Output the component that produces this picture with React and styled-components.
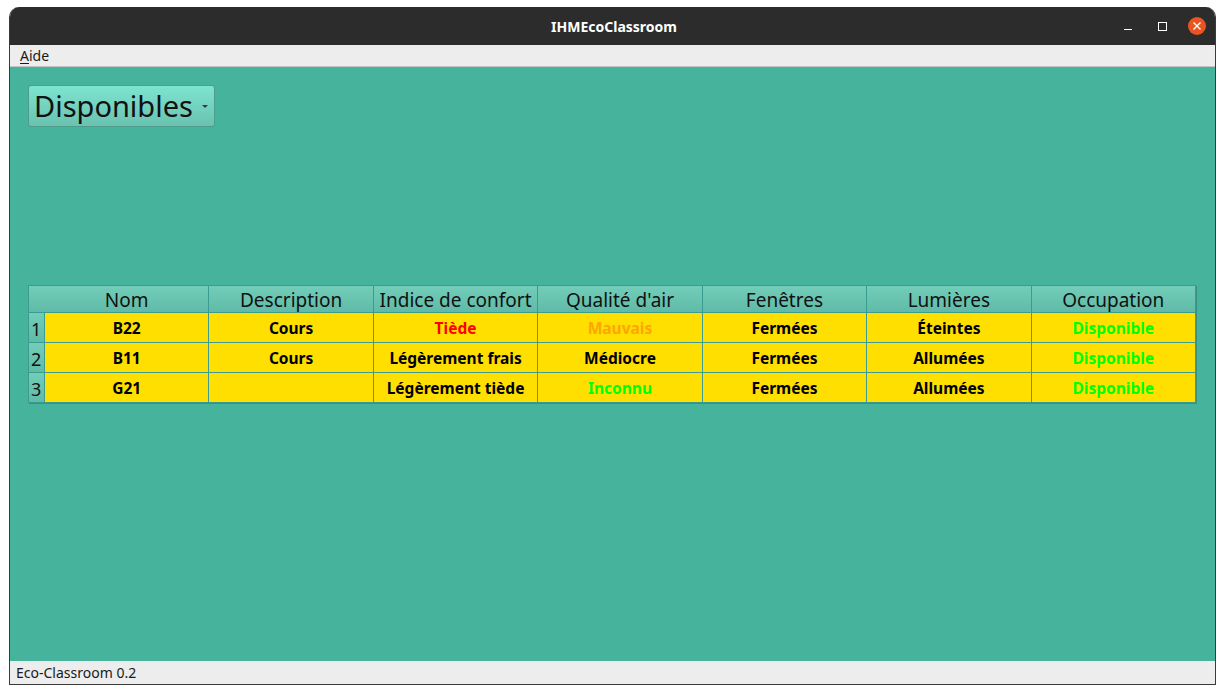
import React from 'react'
import styled, { createGlobalStyle } from 'styled-components'

const GlobalStyle = createGlobalStyle`
  html, body {
    margin: 0;
    padding: 0;
    background: #ffffff;
    font-family: "Noto Sans", "DejaVu Sans", sans-serif;
  }
`

const columns = ['Nom', 'Description', 'Indice de confort', "Qualité d'air", 'Fenêtres', 'Lumières', 'Occupation']

const rows = [
  [
    { text: 'B22' },
    { text: 'Cours' },
    { text: 'Tiède', color: '#ff0000' },
    { text: 'Mauvais', color: '#ffa500' },
    { text: 'Fermées' },
    { text: 'Éteintes' },
    { text: 'Disponible', color: '#00ff00' },
  ],
  [
    { text: 'B11' },
    { text: 'Cours' },
    { text: 'Légèrement frais' },
    { text: 'Médiocre' },
    { text: 'Fermées' },
    { text: 'Allumées' },
    { text: 'Disponible', color: '#00ff00' },
  ],
  [
    { text: 'G21' },
    { text: '' },
    { text: 'Légèrement tiède' },
    { text: 'Inconnu', color: '#00ff00' },
    { text: 'Fermées' },
    { text: 'Allumées' },
    { text: 'Disponible', color: '#00ff00' },
  ],
]

export default function App() {
  return (
    <>
      <GlobalStyle />
      <Window>
        <TitleBar>
          <Title>IHMEcoClassroom</Title>
          <WindowButtons>
            <MinButton />
            <MaxButton />
            <CloseButton>
              <svg width="10" height="10" viewBox="0 0 10 10">
                <path d="M1.5 1.5 L8.5 8.5 M8.5 1.5 L1.5 8.5" stroke="#fff" strokeWidth="1.4" />
              </svg>
            </CloseButton>
          </WindowButtons>
        </TitleBar>
        <MenuBar>
          <MenuItem><u>A</u>ide</MenuItem>
        </MenuBar>
        <Content>
          <Combo>
            <span>Disponibles</span>
            <Arrow />
          </Combo>
          <Table>
            <Corner />
            {columns.map(c => (
              <HeaderCell key={c}>{c}</HeaderCell>
            ))}
            {rows.map((r, i) => (
              <React.Fragment key={i}>
                <RowHeader>{i + 1}</RowHeader>
                {r.map((cell, j) => (
                  <Cell key={j} $color={cell.color}>{cell.text}</Cell>
                ))}
              </React.Fragment>
            ))}
          </Table>
        </Content>
        <StatusBar>Eco-Classroom 0.2</StatusBar>
      </Window>
    </>
  )
}

const Window = styled.div`
  margin: 7px 0 0 9px;
  width: 1207px;
  height: 678px;
  display: flex;
  flex-direction: column;
  border-left: 1px solid #3a3a3a;
  border-right: 1px solid #3a3a3a;
  border-bottom: 1px solid #3a3a3a;
  border-radius: 10px 10px 0 0;
  box-sizing: border-box;
  overflow: hidden;
`

const TitleBar = styled.div`
  height: 38px;
  flex: none;
  background: #2c2c2c;
  position: relative;
  display: flex;
  align-items: center;
  justify-content: center;
`

const Title = styled.div`
  color: #ffffff;
  font-family: "Noto Sans", sans-serif;
  font-weight: bold;
  font-size: 14px;
  margin-left: 3px;
`

const WindowButtons = styled.div`
  position: absolute;
  right: 9px;
  top: 0;
  height: 38px;
  display: flex;
  align-items: center;
`

const MinButton = styled.div`
  width: 8px;
  height: 1px;
  background: #ffffff;
  margin-top: 7px;
  margin-right: 26px;
`

const MaxButton = styled.div`
  width: 7px;
  height: 7px;
  border: 1px solid #ffffff;
  margin-right: 21px;
`

const CloseButton = styled.div`
  width: 18px;
  height: 18px;
  border-radius: 50%;
  background: #e95420;
  display: flex;
  align-items: center;
  justify-content: center;
`

const MenuBar = styled.div`
  height: 21px;
  flex: none;
  background: #ededed;
  border-bottom: 1px solid #c4c4c4;
  display: flex;
  align-items: center;
  padding-left: 10px;
`

const MenuItem = styled.div`
  font-size: 14px;
  color: #1a1a1a;
  u {
    text-decoration-thickness: 1px;
    text-underline-offset: 2px;
  }
`

const Content = styled.div`
  flex: 1;
  background: #46b39d;
  padding: 18px 19px 0 18px;
  display: flex;
  flex-direction: column;
  align-items: flex-start;
`

const Combo = styled.div`
  height: 42px;
  box-sizing: border-box;
  padding: 0 6px 0 5px;
  border: 1px solid #4e9d8c;
  border-radius: 3px;
  background: linear-gradient(#7de4d0, #6ac2b0);
  display: flex;
  align-items: center;
  gap: 9px;
  font-size: 29px;
  color: #111;
  span {
    margin-top: -2px;
  }
`

const Arrow = styled.div`
  width: 0;
  height: 0;
  border-left: 3px solid transparent;
  border-right: 3px solid transparent;
  border-top: 3px solid #3a3a3a;
  margin-top: 1px;
`

const Table = styled.div`
  margin-top: 158px;
  width: 1168px;
  box-sizing: border-box;
  display: grid;
  grid-template-columns: 16px repeat(7, 1fr);
  grid-template-rows: 27px repeat(3, 30px);
  border-top: 1px solid #3a9c90;
  border-left: 1px solid #3a9c90;
  box-shadow: 1px 1px 0 #3a8f85;
`

const Corner = styled.div`
  background: linear-gradient(#72cdb9, #5fbaa7);
  border-bottom: 1px solid #3a9c90;
`

const HeaderCell = styled.div`
  background: linear-gradient(#72cdb9, #5fbaa7);
  border-right: 1px solid #3a9c90;
  border-bottom: 1px solid #3a9c90;
  display: flex;
  align-items: center;
  justify-content: center;
  font-size: 19px;
  color: #111;
  padding-top: 1px;
`

const RowHeader = styled.div`
  background: linear-gradient(#72cdb9, #5fbaa7);
  border-right: 1px solid #3a9c90;
  border-bottom: 1px solid #3a9c90;
  display: flex;
  align-items: flex-end;
  padding-left: 2px;
  padding-bottom: 1px;
  font-size: 18px;
  color: #111;
`

const Cell = styled.div`
  background: #ffdf00;
  border-right: 1px solid #3a9c90;
  border-bottom: 1px solid #3a9c90;
  display: flex;
  align-items: center;
  justify-content: center;
  font-size: 15.5px;
  font-weight: bold;
  color: ${p => p.$color || '#000'};
`

const StatusBar = styled.div`
  height: 23px;
  flex: none;
  background: #ededed;
  display: flex;
  align-items: center;
  padding-left: 6px;
  font-size: 14px;
  color: #1a1a1a;
`
